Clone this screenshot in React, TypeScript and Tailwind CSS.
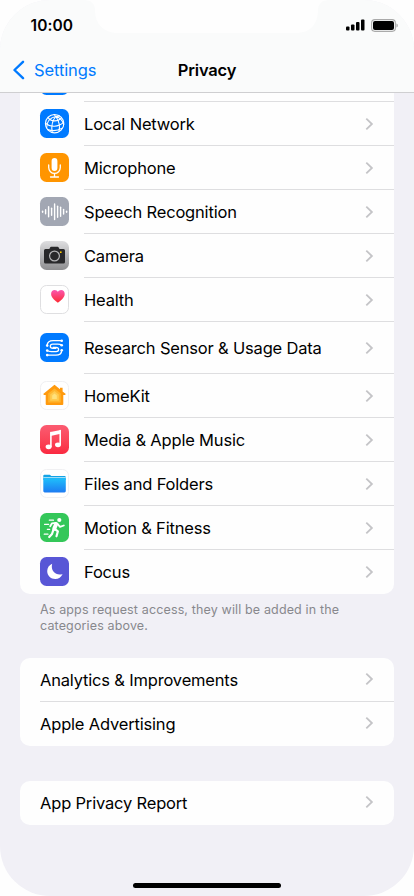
import type { ReactNode } from "react";

const groupClass = "mx-5 overflow-hidden bg-[#fefefe]";
const labelClass = "text-[16.5px] leading-none tracking-[-0.18px] text-black";

function Chevron() {
  return (
    <svg className="mr-5 shrink-0" width="9" height="14" viewBox="0 0 9 14" fill="none">
      <path d="M1.300 1.700 6.900 7l-5.600 5.300" stroke="#c4c4c7" strokeWidth="1.800" />
    </svg>
  );
}

function Tile({ bg, children }: { bg: string; children?: ReactNode }) {
  return (
    <div className={`size-[29px] shrink-0 overflow-hidden rounded-[6.5px] ${bg}`}>
      <svg width="29" height="29" viewBox="0 0 29 29" fill="none" strokeLinecap="round" strokeLinejoin="round">
        {children}
      </svg>
    </div>
  );
}

function GlobeIcon() {
  return (
    <Tile bg="bg-[#007aff]">
      <g stroke="#fff" strokeWidth="1.1">
        <circle cx="14.600" cy="14.700" r="9.200" />
        <path d="M15.800 7.500c-5 1-9 4.500-9.200 11.500M15.800 7.500c-3.500 4-4.600 10-3.600 16M15.800 7.500c3 4 4.400 9.500 3.200 15.200M15.800 7.500c3.500.8 6.500 3.500 7.900 8M15.800 7.500l-1.800-2M15.800 7.500l3.800-.6" />
        <path d="M8.200 8.600c2.500 4.200 9.500 4.500 13.200.2M5.500 14.200c4.500 4.200 13 4.300 18.200-1M7.700 20.500c4.500 1.700 10 1.300 14.500-1.400" />
      </g>
    </Tile>
  );
}

function MicIcon() {
  return (
    <Tile bg="bg-[#ff9500]">
      <rect x="11.600" y="5" width="5.800" height="13" rx="2.900" fill="#fff" />
      <path d="M8.700 12v2.600a5.800 5.800 0 0 0 11.600 0V12M14.500 20.600V24M10.500 24h8" stroke="#fff" strokeWidth="1.300" />
    </Tile>
  );
}

function WaveIcon() {
  const bars = [1, 4, 10, 7, 15.5, 11, 9, 4.5, 1];
  return (
    <Tile bg="bg-[#a2a7b3]">
      {bars.map((h, i) => (
        <path key={i} d={`M${2.6 + i * 3} ${14.8 - h / 2}v${h}`} stroke="#fff" strokeWidth="1.400" />
      ))}
    </Tile>
  );
}

function CameraIcon() {
  return (
    <Tile bg="bg-linear-to-b from-[#dedee0] to-[#8e8e90]">
      <path d="M5.500 8h3.700c.7 0 .8-2.200 2-2.200h6.400c1.200 0 1.300 2.200 2 2.200h3.900A1.500 1.500 0 0 1 25 9.500v11.600a1.500 1.500 0 0 1-1.500 1.500h-18A1.500 1.500 0 0 1 4 21.100V9.500A1.500 1.500 0 0 1 5.500 8Z" fill="#28282a" />
      <circle cx="14.500" cy="15" r="4.900" stroke="#b5b5b7" strokeWidth="1.200" />
      <circle cx="20.800" cy="11.200" r=".9" fill="#fc0" />
    </Tile>
  );
}

function HealthIcon() {
  return (
    <Tile bg="border border-[#dfdfe1] bg-white">
      <defs>
        <linearGradient id="heart" x1="0" y1="0" x2="0" y2="1">
          <stop stopColor="#fb56b0" />
          <stop offset="1" stopColor="#fd2a32" />
        </linearGradient>
      </defs>
      <path d="M16.900 16.700c-2.200-1.600-6.800-4.700-6.800-8.700 0-2.400 1.600-4 3.600-4 1.400 0 2.500.7 3.200 1.900.7-1.200 1.800-1.900 3.200-1.900 2 0 3.600 1.600 3.600 4 0 4-4.600 7.100-6.800 8.700Z" fill="url(#heart)" />
    </Tile>
  );
}

function ResearchIcon() {
  const dots = [
    [21.7, 7.7],
    [21.7, 12.2],
    [21.7, 17.2],
    [7.2, 12.6],
    [7.2, 17.6],
    [7.2, 22.1],
  ];
  return (
    <Tile bg="bg-[#007aff]">
      <g stroke="#fff" strokeWidth="1.300">
        <path d="M21.700 7.700h-8.500c-3.600 0-6 1.800-6 4.900" />
        <path d="M7.200 22.100h8.500c3.600 0 6-1.800 6-4.900" />
        <path d="M21.700 12.200c-1.200-.9-2.300-1-4-1h-4.900c-3.300 0-3.300 4.200 0 4.200h3" />
        <path d="M7.200 17.600c1.200.9 2.300 1 4 1h4.900c3.300 0 3.300-4.200 0-4.200h-3" />
      </g>
      <g fill="#fff">
        {dots.map(([x, y]) => (
          <circle key={`${x}-${y}`} cx={x} cy={y} r="1.300" />
        ))}
      </g>
    </Tile>
  );
}

function HomeIcon() {
  return (
    <Tile bg="border border-[#f0f0f2] bg-white">
      <path d="M13.500 2.800 19 7.200V5.800h2.600v3.600l3.200 2.600-.8 1h-1.700v9a1 1 0 0 1-1 1H5.700a1 1 0 0 1-1-1v-9H3l-.8-1Z" fill="#ff9a0e" />
      <path d="m13.500 6.500 6.300 5v9H7.200v-9Z" fill="#ffb52e" />
      <path d="m13.500 9 4.300 3.500v6.300H9.200v-6.300Z" fill="#ffcb51" />
      <path d="m13.500 11.500 2.300 2v3.500h-4.600v-3.500Z" fill="#ffe17c" />
    </Tile>
  );
}

function MusicIcon() {
  return (
    <Tile bg="bg-linear-to-b from-[#fb5b71] to-[#fa2840]">
      <path d="M10.500 7 20.700 4.900v3.900l-10.200 2.100Z" fill="#fff" />
      <path d="M10.900 7.500v14M20.200 5.500v14" stroke="#fff" strokeWidth="1.600" />
      <ellipse cx="8.600" cy="21.800" rx="3" ry="2.400" fill="#fff" />
      <ellipse cx="18" cy="19.800" rx="3" ry="2.400" fill="#fff" />
    </Tile>
  );
}

function FilesIcon() {
  return (
    <Tile bg="border border-[#f0f0f2] bg-white">
      <defs>
        <linearGradient id="folder" x1="0" y1="0" x2="0" y2="1">
          <stop stopColor="#1fc0fb" />
          <stop offset="1" stopColor="#1d7bf2" />
        </linearGradient>
      </defs>
      <path d="M3.300 4.800h5.500l1.500 1.200h13.400a1 1 0 0 1 1 1v3H2.300V5.800a1 1 0 0 1 1-1Z" fill="#13a3e6" />
      <path d="M2.800 7.600h21.500" stroke="#d8f2fd" strokeWidth=".8" />
      <path d="M2.300 8.200h22.500v12.900a1.400 1.400 0 0 1-1.400 1.400H3.700a1.400 1.400 0 0 1-1.400-1.400Z" fill="url(#folder)" />
    </Tile>
  );
}

function RunnerIcon() {
  return (
    <Tile bg="bg-[#34c759]">
      <circle cx="19.300" cy="7" r="2.100" fill="#fff" />
      <g stroke="#fff">
        <path d="m16.200 11-2 4.800" strokeWidth="4" />
        <path d="m15.800 9.800-3.800.5-1.800 3M17.500 10.800l2.500 3 3.800-1.300" strokeWidth="1.800" />
        <path d="m14.800 16 3.100 2.300-1.400 5M13.300 17.200l-1.300 3.800-2.800 3" strokeWidth="2.200" />
        <path d="M9.300 7.200h4.200M4.500 11.300h4.200M7.300 16.300h2.400M4.200 21.200h3.800" strokeWidth="1.200" />
      </g>
    </Tile>
  );
}

function MoonIcon() {
  return (
    <Tile bg="bg-[#5856d6]">
      <path d="M12.200 6.800c-3 1.200-5 4-5 7.200 0 4.500 3.500 8 8 8 3.300 0 6.200-2 7.400-5-5.700 2.200-12.500-2.500-10.400-10.200Z" fill="#fff" />
    </Tile>
  );
}

const permissions = [
  { label: "Local Network", icon: <GlobeIcon /> },
  { label: "Microphone", icon: <MicIcon /> },
  { label: "Speech Recognition", icon: <WaveIcon /> },
  { label: "Camera", icon: <CameraIcon /> },
  { label: "Health", icon: <HealthIcon /> },
  { label: "Research Sensor & Usage Data", icon: <ResearchIcon />, tall: true },
  { label: "HomeKit", icon: <HomeIcon /> },
  { label: "Media & Apple Music", icon: <MusicIcon /> },
  { label: "Files and Folders", icon: <FilesIcon /> },
  { label: "Motion & Fitness", icon: <RunnerIcon /> },
  { label: "Focus", icon: <MoonIcon /> },
];

function Row({ label, icon, tall, last }: { label: string; icon?: ReactNode; tall?: boolean; last?: boolean }) {
  return (
    <div className={`flex items-center pl-5 ${tall ? "h-13" : "h-11"}`}>
      {icon && <div className="mr-[15px] -mt-px">{icon}</div>}
      <div className={`flex flex-1 items-center justify-between self-stretch border-b ${last ? "border-transparent" : "border-[#dedee0]"}`}>
        <span className={`${labelClass} pt-[2px]`}>{label}</span>
        <Chevron />
      </div>
    </div>
  );
}

function Header() {
  return (
    <header className="relative h-[93px] border-b border-[#cfcfd1] bg-[#fafbfb]">
      <svg className="absolute left-0 top-0" width="414" height="34" viewBox="0 0 414 34">
        <path d="M84 0c7 0 11 4 11 10 0 14 9 23 23 23h178c14 0 22-9 22-23 0-6 4-10 11-10Z" fill="#fefefe" />
      </svg>
      <div className="relative flex h-[50px] items-center justify-between pl-[30.5px] pr-[16.5px]">
        <span className="pt-px text-[15.500px] font-semibold leading-none tracking-[0.1px]">10:00</span>
        <div className="flex items-center gap-[6px]">
          <svg width="19" height="12" viewBox="0 0 19 12">
            <rect x="0" y="7.500" width="3.500" height="4" rx="1" />
            <rect x="5" y="5.500" width="3.500" height="6" rx="1" />
            <rect x="10" y="3" width="3.500" height="8.500" rx="1" />
            <rect x="15" y="0.500" width="3.500" height="11" rx="1" />
          </svg>
          <svg width="27" height="13" viewBox="0 0 27 13">
            <rect x=".6" y=".6" width="23.800" height="11.800" rx="3.300" fill="none" stroke="#aaa" strokeWidth="1.100" />
            <rect x="2" y="2" width="21" height="9" rx="2" />
            <path d="M25.500 4.500c1.600.6 1.600 3.400 0 4Z" fill="#999" />
          </svg>
        </div>
      </div>
      <div className="relative grid h-[40px] grid-cols-3 items-center">
        <div className="flex items-center gap-2 pl-[13px] text-[#007aff]">
          <svg width="13" height="20" viewBox="0 0 13 20" fill="none" stroke="currentColor" strokeWidth="2.400" strokeLinecap="round" strokeLinejoin="round">
            <path d="M10 1.800 1.500 10l8.500 8.200" />
          </svg>
          <span className="text-[16.500px] leading-none tracking-[-0.1px]">Settings</span>
        </div>
        <h1 className="text-center text-[16.500px] font-semibold leading-none tracking-[-0.2px] text-black">Privacy</h1>
      </div>
    </header>
  );
}

export default function App() {
  return (
    <div className="h-[896px] w-[414px] overflow-hidden bg-[#fefefe] font-['Inter',sans-serif]">
      <main className="relative h-full overflow-hidden rounded-[50px] bg-[#f1f0f6]">
        <Header />

        <section className={`${groupClass} rounded-b-[10px]`}>
          <div className="flex h-[9px] items-end pl-5">
            <div className="mb-[7px] mr-[15px]">
              <Tile bg="bg-[#007aff]" />
            </div>
            <div className="flex-1 border-b border-[#dedee0]" />
          </div>
          {permissions.map((item, i) => (
            <Row key={item.label} {...item} last={i === permissions.length - 1} />
          ))}
        </section>
        <p className="mx-10 mt-2 text-[12.500px] leading-4 tracking-[0.140px] text-[#88888d]">
          As apps request access, they will be added in the categories above.
        </p>

        <section className={`${groupClass} mt-[23.5px] rounded-[10px]`}>
          <Row label="Analytics & Improvements" />
          <Row label="Apple Advertising" last />
        </section>

        <section className={`${groupClass} mt-[35px] rounded-[10px]`}>
          <Row label="App Privacy Report" last />
        </section>

        <div className="absolute bottom-2 left-[133px] h-[5px] w-[148px] rounded-full bg-black" />
      </main>
    </div>
  );
}
